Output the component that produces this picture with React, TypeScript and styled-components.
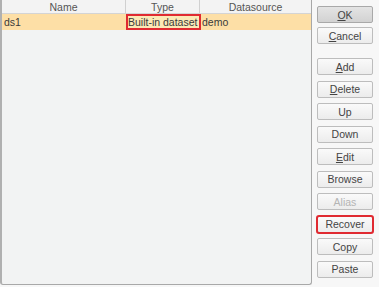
import React from "react";
import styled, {createGlobalStyle} from "styled-components";

const GlobalStyle = createGlobalStyle`
  html, body {
    margin: 0;
    padding: 0;
    background: #f7f7f7;
    font-family: "Liberation Sans", Arial, sans-serif;
  }
`

const Window = styled.div`
  display: flex;
  width: 379px;
  height: 287px;
  background: #f7f7f7;
`

const TablePanel = styled.div`
  display: flex;
  flex-direction: column;
  width: 312px;
  height: 285px;
  box-sizing: border-box;
  border: 1px solid #a8a8a8;
  border-top: none;
  border-left: 2px solid #b0b0b0;
  border-radius: 0 0 3px 3px;
  background: #f2f3f3;
  overflow: hidden;
`

const Row = styled.div<{header?: boolean}>`
  display: grid;
  grid-template-columns: 124px 74px 1fr;
  height: ${p => p.header ? 13 : 16}px;
  background: ${p => p.header ? '#f3f3f3' : '#fddfa6'};
  border-bottom: ${p => p.header ? '1px solid #d4d4d4' : 'none'};
`

const Cell = styled.div<{header?: boolean, marked?: boolean}>`
  position: relative;
  display: flex;
  align-items: center;
  justify-content: ${p => p.header ? 'center' : 'flex-start'};
  padding-left: ${p => p.header ? 0 : 2}px;
  font-size: 10.5px;
  color: ${p => p.header ? '#555' : '#3a3a3a'};
  border-right: ${p => p.header ? '1px solid #d0d0d0' : 'none'};
  background: ${p => p.marked ? '#fbe9b6' : 'transparent'};
  white-space: nowrap;
  &:last-child {
    border-right: none;
  }
`

const Highlight = styled.div`
  position: absolute;
  inset: 0 -1px 0 0;
  border: 2px solid #e02a31;
  pointer-events: none;
`

const ButtonColumn = styled.div`
  display: flex;
  flex-direction: column;
  padding: 6px 0 0 5px;
`

const Group = styled.div<{gap: number, top?: number}>`
  display: flex;
  flex-direction: column;
  gap: ${p => p.gap}px;
  margin-top: ${p => p.top || 0}px;
`

const Button = styled.div<{primary?: boolean, disabled?: boolean, marked?: boolean}>`
  position: relative;
  display: flex;
  align-items: center;
  justify-content: center;
  width: 56px;
  height: 17px;
  box-sizing: border-box;
  border: 1px solid ${p => p.primary ? '#a9a9a9' : '#bdbdbd'};
  border-radius: 2px;
  background: ${p => p.primary
    ? 'linear-gradient(#e4e4e4, #d2d2d2)'
    : 'linear-gradient(#fafafa, #ececec)'};
  font-size: 10.5px;
  color: ${p => p.disabled ? '#b4b4b4' : '#444'};
  ${p => p.marked ? 'outline: 2px solid #e02a31; outline-offset: -1px;' : ''}
`

const names = ['Add', 'Delete', 'Up', 'Down', 'Edit', 'Browse', 'Alias', 'Recover', 'Copy', 'Paste']
const mnemonic: Record<string, number> = {Add: 0, Delete: 0, Edit: 0}

const Label = ({text, index}: {text: string, index?: number}) => {
  if (index === undefined) return <>{text}</>
  return <>{text.slice(0, index)}<u>{text[index]}</u>{text.slice(index + 1)}</>
}

const App = () => {
  return (
    <Window>
      <GlobalStyle/>
      <TablePanel>
        <Row header>
          <Cell header>Name</Cell>
          <Cell header>Type</Cell>
          <Cell header>Datasource</Cell>
        </Row>
        <Row>
          <Cell>ds1</Cell>
          <Cell marked>Built-in dataset<Highlight/></Cell>
          <Cell>demo</Cell>
        </Row>
      </TablePanel>
      <ButtonColumn>
        <Group gap={4}>
          <Button primary><Label text="OK" index={0}/></Button>
          <Button><Label text="Cancel" index={0}/></Button>
        </Group>
        <Group gap={5.5} top={14}>
          {names.map(n => (
            <Button key={n} disabled={n === 'Alias'} marked={n === 'Recover'}>
              <Label text={n} index={mnemonic[n]}/>
            </Button>
          ))}
        </Group>
      </ButtonColumn>
    </Window>
  )
};

export default App
